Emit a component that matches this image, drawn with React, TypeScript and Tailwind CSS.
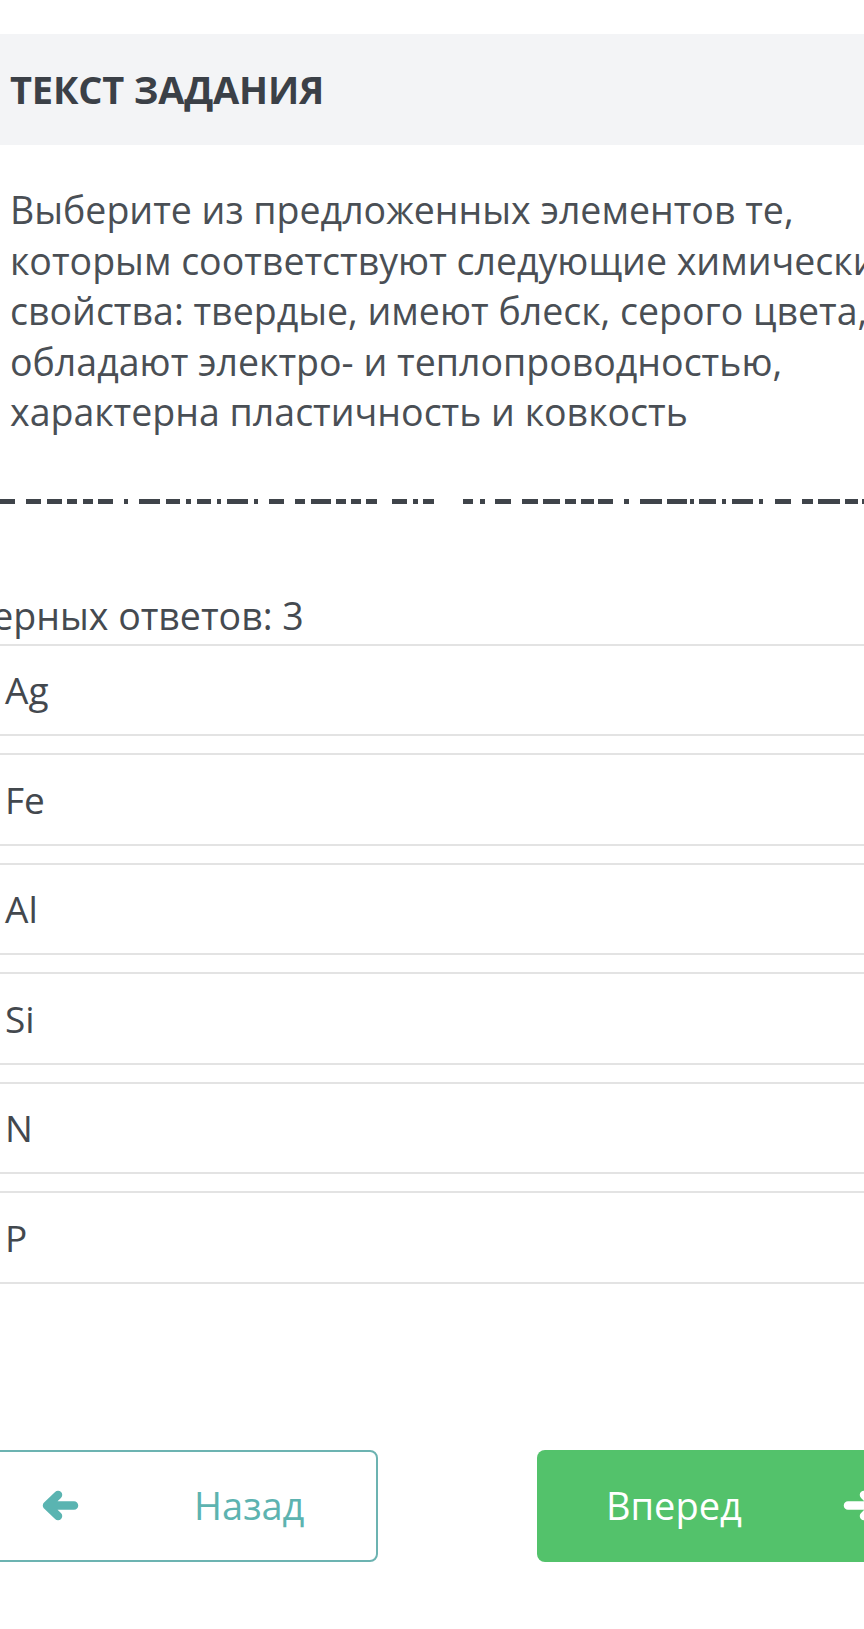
import React from "react";

const dashes: [number, number][] = [
  [0, 15], [26, 41], [47, 62], [67, 77], [83, 93], [98, 113], [124, 128], [139, 160], [166, 180], [186, 191], [197, 211], [217, 221], [227, 248], [254, 258], [269, 284], [295, 305],
  [311, 331], [336, 346], [351, 361], [366, 377], [392, 407], [413, 418], [423, 434], [463, 473], [480, 485], [495, 511], [522, 538], [543, 560], [565, 576], [581, 594],
  [598, 613], [624, 629], [640, 662], [667, 687], [690, 694], [699, 716], [722, 726], [732, 753], [759, 763], [775, 791], [802, 813], [818, 840], [845, 858], [862, 864],
];

const answers = ["Ag", "Fe", "Al", "Si", "N", "P"];

export default function App() {
  return (
    <div
      className="w-[864px] h-[1629px] bg-white overflow-hidden text-[#454a50]"
      style={{ fontFamily: '"Open Sans", "Noto Sans", sans-serif' }}
    >
      <div className="h-[34px]" />
      <div className="h-[111px] bg-[#f3f4f6] flex items-center px-[10px]">
        <div className="text-[38px] font-bold text-[#3b4047] tracking-[-0.2px]">ТЕКСТ ЗАДАНИЯ</div>
      </div>
      <div className="pt-[40px] px-[10px] text-[37.5px] leading-[50.5px] whitespace-nowrap text-[#4a4f55]">
        Выберите из предложенных элементов те,
        <br />
        которым соответствуют следующие химические
        <br />
        свойства: твердые, имеют блеск, серого цвета,
        <br />
        обладают электро- и теплопроводностью,
        <br />
        характерна пластичность и ковкость
      </div>
      <div className="mt-[61px] h-[5px]">
        <svg width="864" height="5" viewBox="0 0 864 5" className="block">
          {dashes.map(([a, b], i) => (
            <rect key={i} x={a} y={0} width={b - a} height={5} fill="#3f444a" />
          ))}
        </svg>
      </div>
      <div className="ml-[-32px] mt-[89px] text-[37.5px] leading-[46px] whitespace-nowrap text-[#454a50]">
        Верных ответов: 3
      </div>
      <div className="ml-[-30px] mt-[5px] flex flex-col gap-[17px]">
        {answers.map((a) => (
          <div
            key={a}
            className="h-[92.5px] border-y-2 border-[#e3e3e3] flex items-center pl-[35px] text-[37px] text-[#43484e]"
          >
            {a}
          </div>
        ))}
      </div>
      <div className="mt-[166px] flex items-center">
        <div className="ml-[-20px] w-[398px] h-[112px] shrink-0 border-2 border-[#6cb3b1] rounded-[8px] flex items-center">
          <svg width="38" height="31" viewBox="0 0 38 31" className="ml-[59px] shrink-0">
            <path
              d="M33 15.5 H7 M17 5 L6 15.5 L17 26"
              fill="none"
              stroke="#5ab4b1"
              strokeWidth="8.5"
              strokeLinecap="round"
              strokeLinejoin="round"
            />
          </svg>
          <span className="ml-[115px] text-[38px] text-[#5db3b0]">Назад</span>
        </div>
        <div className="ml-[159px] w-[380px] h-[112px] shrink-0 rounded-[8px] bg-[#53c26b] flex items-center">
          <span className="ml-[69px] text-[38px] text-white">Вперед</span>
          <svg width="38" height="31" viewBox="0 0 38 31" className="ml-[101px] shrink-0">
            <path
              d="M5 15.5 H31 M21 5 L32 15.5 L21 26"
              fill="none"
              stroke="#ffffff"
              strokeWidth="8.5"
              strokeLinecap="round"
              strokeLinejoin="round"
            />
          </svg>
        </div>
      </div>
    </div>
  );
}
